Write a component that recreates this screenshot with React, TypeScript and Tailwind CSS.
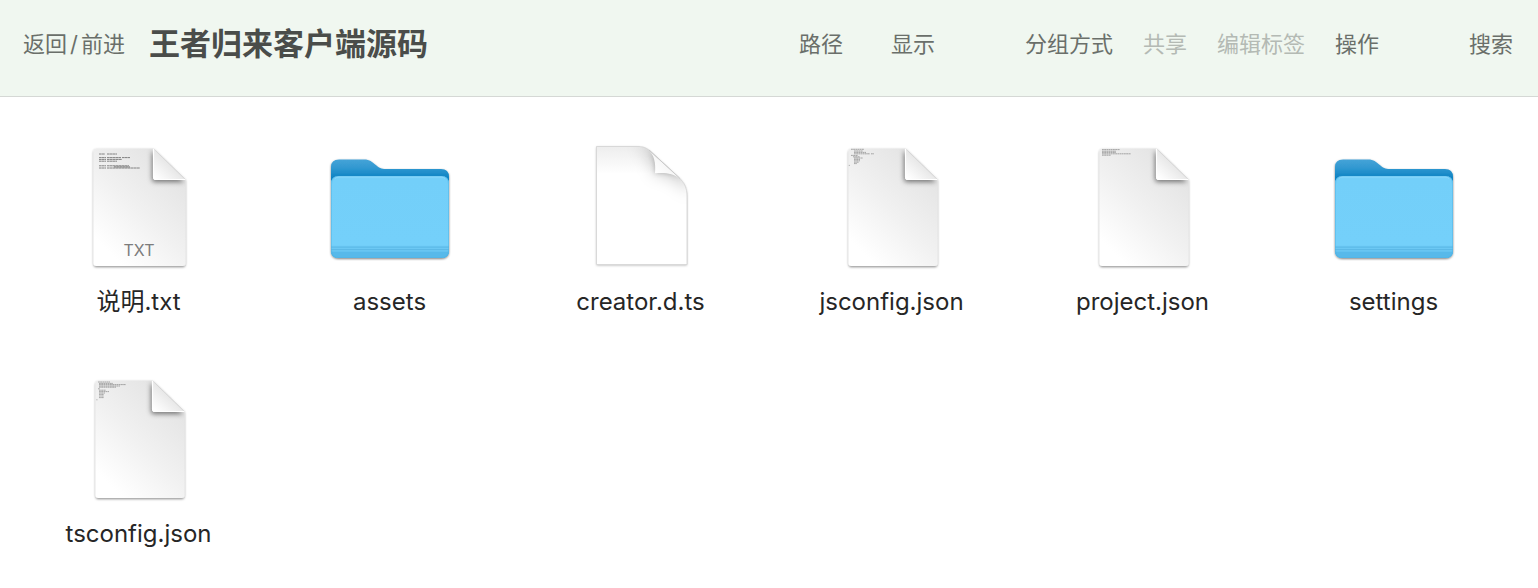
import React from 'react';

type Line = [x: number, y: number, width: number];

interface FileItem {
    name: string;
    kind: 'folder' | 'blank' | 'text' | 'json';
    lines?: Line[];
}

const files: FileItem[] = [
    {
        name: '说明.txt',
        kind: 'text',
        lines: [
            [24, 10, 6], [32, 10, 10],
            [24, 13.6, 7], [32, 13.6, 14], [47, 13.6, 8],
            [24, 15.4, 7], [32, 15.4, 15],
            [24, 17.2, 7], [32, 17.2, 10],
            [24, 21.8, 7], [32, 21.8, 22],
            [24, 24, 7], [32, 24, 33],
            [39, 22.9, 16],
        ],
    },
    { name: 'assets', kind: 'folder' },
    { name: 'creator.d.ts', kind: 'blank' },
    {
        name: 'jsconfig.json',
        kind: 'json',
        lines: [
            [23, 5.3, 13], [26, 7, 9], [26, 8.4, 12], [26, 9.8, 16], [43, 9.8, 3],
            [23, 11.4, 7], [25, 12.8, 7], [26, 14, 9], [26, 15.4, 6], [26, 16.8, 6],
            [26, 18.2, 5], [26, 19.6, 3], [20.8, 21.4, 1],
        ],
    },
    {
        name: 'project.json',
        kind: 'json',
        lines: [[23, 5.6, 18], [23, 7.2, 14], [23, 8.4, 14], [23, 9.8, 29], [23, 11.2, 9]],
    },
    { name: 'settings', kind: 'folder' },
    {
        name: 'tsconfig.json',
        kind: 'json',
        lines: [
            [23, 6, 12], [24, 7.4, 14], [24, 8.6, 27], [24, 10, 21], [24, 11.2, 17],
            [23, 12.8, 2], [24, 14.2, 7], [24, 15.6, 10], [24, 17, 6], [24, 18.4, 5],
            [24, 20, 5], [24, 21.6, 5], [21.4, 23.8, 1],
        ],
    },
];

function FolderIcon() {
    return (
        <svg viewBox="0 0 128 128" className="w-32 h-32" aria-hidden="true">
            <defs>
                <linearGradient id="folder-back" x1="0" y1="15" x2="0" y2="34" gradientUnits="userSpaceOnUse">
                    <stop offset="0" stopColor="#47a4d8" />
                    <stop offset="0.5" stopColor="#2f97d0" />
                    <stop offset="1" stopColor="#0c82c3" />
                </linearGradient>
                <linearGradient id="folder-front" x1="0" y1="32" x2="0" y2="114" gradientUnits="userSpaceOnUse">
                    <stop offset="0" stopColor="#7bd1f9" />
                    <stop offset="0.04" stopColor="#73cff9" />
                    <stop offset="0.84" stopColor="#74d0fa" />
                    <stop offset="0.87" stopColor="#6cc8f4" />
                </linearGradient>
                <filter id="folder-shadow" x="-10%" y="-10%" width="120%" height="120%">
                    <feDropShadow dx="0" dy="1" stdDeviation="1" floodColor="#000" floodOpacity="0.5" />
                </filter>
                <clipPath id="folder-clip">
                    <path d="M5 40Q5 32 12.500 32H115.500Q123 32 123 40V106Q123 114 115.500 114H12.500Q5 114 5 106Z" />
                </clipPath>
            </defs>
            <g filter="url(#folder-shadow)">
                <path d="M5 23Q5 15.500 13 15.500H38C44 15.500 46 18 49.500 20.800C53 23.800 55 25 60 25H115Q123 25 123 33V106Q123 114 115.500 114H12.500Q5 114 5 106Z" fill="url(#folder-back)" />
            </g>
            <g clipPath="url(#folder-clip)">
                <rect x="5" y="32" width="118" height="82" fill="url(#folder-front)" />
                <rect x="5" y="102.500" width="118" height="1.200" fill="#5cb9e7" />
                <rect x="5" y="105" width="118" height="1.200" fill="#5cb9e7" />
                <rect x="5" y="107.600" width="118" height="6.400" fill="#57b9ea" />
            </g>
            <path d="M5.500 106V40Q5.500 32.500 12.500 32.500H115.500Q122.500 32.500 122.500 40V106Q122.500 113.500 115.500 113.500H12.500Q5.500 113.500 5.500 106Z" fill="none" stroke="#4fb1e2" strokeOpacity="0.5" />
            <path d="M9 34.500Q10.500 33 13 33H115Q117.500 33 119 34.500" fill="none" stroke="#8ad8fb" strokeWidth="1" />
        </svg>
    );
}

function BlankIcon() {
    const body = 'M19.500 2.500H61C68 2.500 72 5.500 76 9.500L102 33.500C107.500 39 110 44 110 52V120.500H19.500Z';
    const curl = 'M71 5.500C77 10 79 19 78 29.300C87 28.300 96 29 103 34.500Z';

    return (
        <svg viewBox="0 0 128 128" className="w-32 h-32" aria-hidden="true">
            <defs>
                <linearGradient id="blank-top" x1="0" y1="2" x2="0" y2="30" gradientUnits="userSpaceOnUse">
                    <stop offset="0" stopColor="#ededed" />
                    <stop offset="1" stopColor="#fff" />
                </linearGradient>
                <linearGradient id="blank-curl" x1="90" y1="18" x2="79" y2="29" gradientUnits="userSpaceOnUse">
                    <stop offset="0" stopColor="#f4f4f4" />
                    <stop offset="1" stopColor="#fff" />
                </linearGradient>
                <filter id="blank-shadow" x="-10%" y="-10%" width="120%" height="120%">
                    <feDropShadow dx="0" dy="0.8" stdDeviation="1" floodColor="#000" floodOpacity="0.3" />
                </filter>
                <filter id="blank-blur" x="-100%" y="-100%" width="300%" height="300%">
                    <feGaussianBlur stdDeviation="8" />
                </filter>
                <filter id="blank-edge" x="-50%" y="-50%" width="200%" height="200%">
                    <feGaussianBlur stdDeviation="2.500" />
                </filter>
                <clipPath id="blank-clip">
                    <path d={body} />
                </clipPath>
            </defs>
            <path d={body} fill="url(#blank-top)" filter="url(#blank-shadow)" />
            <g clipPath="url(#blank-clip)">
                <path d="M60 0C74 8 77 18 77 30C88 30 100 32 112 50V0Z" fill="#000" fillOpacity="0.2" filter="url(#blank-blur)" />
                <path d={curl} fill="#000" fillOpacity="0.22" filter="url(#blank-edge)" />
            </g>
            <path d={body} fill="none" stroke="#d2d2d2" strokeWidth="0.8" />
            <path d={curl} fill="url(#blank-curl)" />
            <path d="M72 6L103 34.500" fill="none" stroke="#c6c6c6" strokeWidth="0.9" />
        </svg>
    );
}

function DocumentIcon({ id, lines, label }: { id: string; lines: Line[]; label?: string }) {
    // labelled pages are slightly wider than the others
    const left = label ? 18.5 : 20.5;
    const right = label ? 110.5 : 109.5;
    const fold = label ? 78 : 77;

    const body = `M${left + 3} 4.500H${fold + 1}L${right} 35V119Q${right} 122 ${right - 3} 122H${left + 3}Q${left} 122 ${left} 119V7.500Q${left} 4.500 ${left + 3} 4.500Z`;
    const flap = `M${fold} 4.500V33Q${fold} 36 ${fold + 3} 36H${right}Z`;

    return (
        <svg viewBox="0 0 128 128" className="w-32 h-32" aria-hidden="true">
            <defs>
                <linearGradient id={`${id}-page`} x1="104" y1="36" x2="34" y2="108" gradientUnits="userSpaceOnUse">
                    <stop offset="0" stopColor="#e5e5e5" />
                    <stop offset="0.5" stopColor="#f1f1f1" />
                    <stop offset="1" stopColor="#fff" />
                </linearGradient>
                <linearGradient id={`${id}-flap`} x1="93" y1="20" x2="80" y2="34" gradientUnits="userSpaceOnUse">
                    <stop offset="0" stopColor="#e8e8e8" />
                    <stop offset="1" stopColor="#fff" />
                </linearGradient>
                <filter id={`${id}-shadow`} x="-10%" y="-10%" width="120%" height="120%">
                    <feDropShadow dx="0" dy="1.200" stdDeviation="1.200" floodColor="#000" floodOpacity="0.42" />
                </filter>
                <filter id={`${id}-blur`} x="-50%" y="-50%" width="200%" height="200%">
                    <feGaussianBlur stdDeviation="2.800" />
                </filter>
                <clipPath id={`${id}-clip`}>
                    <path d={body} />
                </clipPath>
            </defs>
            <path d={body} fill={`url(#${id}-page)`} filter={`url(#${id}-shadow)`} />
            <g clipPath={`url(#${id}-clip)`}>
                <path d={flap} fill="#000" fillOpacity="0.5" filter={`url(#${id}-blur)`} transform="translate(-1 2)" />
                <path d={flap} fill={`url(#${id}-flap)`} />
                <path d={`M${fold + 0.5} 4.500V33Q${fold + 0.5} 35.500 ${fold + 3} 35.500H${right}`} fill="none" stroke="#fff" strokeWidth="1.200" />
            </g>
            {lines.map(([x, y, width], idx) => (
                <path
                    key={idx}
                    d={`M${x} ${y}h${width}`}
                    stroke="#555"
                    strokeOpacity={label ? 0.7 : 0.6}
                    strokeWidth={label ? 1 : 0.8}
                    strokeDasharray={label ? '2.7 0.3' : '1.8 0.4'}
                />
            ))}
            {label && (
                <text x="64" y="112" textAnchor="middle" fontSize="16" fill="#7c7c7c">{label}</text>
            )}
        </svg>
    );
}

function FileIcon({ file }: { file: FileItem }) {
    if (file.kind === 'folder') return <FolderIcon />;
    if (file.kind === 'blank') return <BlankIcon />;
    return (
        <DocumentIcon
            id={file.name.split('.')[0]}
            lines={file.lines ?? []}
            label={file.kind === 'text' ? 'TXT' : undefined}
        />
    );
}

function Toolbar() {
    return (
        <header className="flex items-center bg-[#f0f7f0] border-b border-[#d5d8d5] pt-7 pb-9 pl-[23px] pr-[25px] text-[22px] leading-8 text-[#6a6f6a] whitespace-nowrap">
            <button type="button">返回<span className="px-[3px]">/</span>前进</button>
            <h1 className="ml-6 text-[31px] leading-8 font-bold text-[#4a4d4a]">王者归来客户端源码</h1>
            <nav className="ml-auto flex items-center">
                <button type="button">路径</button>
                <button type="button" className="ml-12">显示</button>
                <button type="button" className="ml-[90px]">分组方式</button>
                <button type="button" className="ml-[30px] text-[#b4bab4]" disabled>共享</button>
                <button type="button" className="ml-[30px] text-[#b4bab4]" disabled>编辑标签</button>
                <button type="button" className="ml-[30px]">操作</button>
                <button type="button" className="ml-[90px]">搜索</button>
            </nav>
        </header>
    );
}

export default function App() {
    return (
        <div className="min-h-screen bg-white font-['Inter','Noto_Sans_CJK_SC',sans-serif]">
            <Toolbar />
            <main className="grid grid-cols-6 gap-y-[58px] pt-[47px] pb-9 pl-[13px] pr-[19px]">
                {files.map((file) => (
                    <button key={file.name} type="button" className="flex flex-col items-center gap-[14px]">
                        <FileIcon file={file} />
                        <span className="text-2xl leading-8 text-[#262626]">{file.name}</span>
                    </button>
                ))}
            </main>
        </div>
    );
}
